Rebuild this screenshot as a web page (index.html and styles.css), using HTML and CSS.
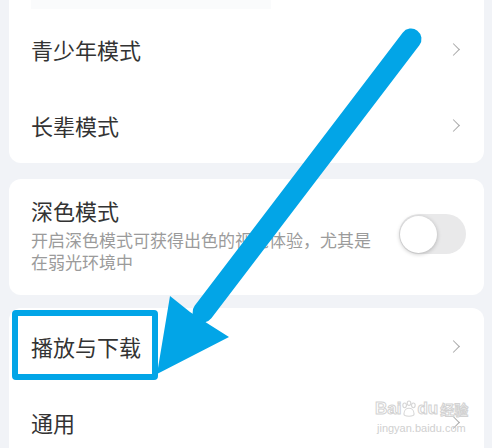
FILE: index.html
```html
<!DOCTYPE html>
<html lang="zh-CN">
<head>
  <meta charset="UTF-8" />
  <meta name="viewport" content="width=device-width, initial-scale=1.0"/>
  <title>设置</title>
  <link rel="stylesheet" href="styles.css">
</head>
<body>

  <div class="page">
    <!-- Mode card -->
    <div class="card card-top">
      <div class="top-fade"><span class="fade-bar"></span></div>
      <div class="row">
        <span class="row-title">青少年模式</span>
        <span class="chevron"></span>
      </div>
      <div class="row">
        <span class="row-title">长辈模式</span>
        <span class="chevron"></span>
      </div>
    </div>

    <!-- Dark mode card -->
    <div class="card card-dark">
      <div class="dark-text">
        <div class="row-title">深色模式</div>
        <div class="row-sub">开启深色模式可获得出色的视觉体验，尤其是</div>
        <div class="row-sub">在弱光环境中</div>
      </div>
      <div class="switch"><span class="knob"></span></div>
    </div>

    <!-- Playback card -->
    <div class="card">
      <div class="row">
        <span class="row-title">播放与下载</span>
        <span class="chevron"></span>
      </div>
      <div class="row">
        <span class="row-title">通用</span>
        <span class="chevron"></span>
      </div>
    </div>
  </div>

  <!-- Annotation overlay -->
  <div class="highlight"></div>
  <svg class="arrow" width="492" height="448" viewBox="0 0 492 448">
    <line x1="411" y1="39" x2="203" y2="312" stroke="#02a5e7" stroke-width="21" stroke-linecap="round"/>
    <polygon points="157,374 170,296 190,312 210,325 229,337" fill="#02a5e7"/>
  </svg>

  <div class="watermark">
    <div class="wm-logo">Bai<svg class="paw" width="16" height="18" viewBox="0 0 22 24">
      <g fill="none" stroke="#d6d6d6" stroke-width="1.5">
        <ellipse cx="5" cy="7" rx="2.5" ry="3.2"/>
        <ellipse cx="11" cy="4" rx="2.5" ry="3"/>
        <ellipse cx="17" cy="7" rx="2.5" ry="3.2"/>
        <path d="M4 19 C4 13 8 11 11 11 C14 11 18 13 18 19 C18 23 4 23 4 19 Z"/>
      </g>
    </svg>du<span class="wm-cn">经验</span></div>
    <div class="wm-url">jingyan.baidu.com</div>
  </div>

</body>
</html>
```

FILE: styles.css
```css
body {
  margin: 0;
  width: 492px;
  height: 448px;
  overflow: hidden;
  background-color: #f1f3f7;
  font-family: "Noto Sans CJK SC", "Noto Sans", sans-serif;
  position: relative;
}

.page {
  display: flex;
  flex-direction: column;
  gap: 13px;
  padding: 0 8px 0 9px;
}

.card {
  background: #fff;
  border-radius: 12px;
}

.card-top {
  border-radius: 0 0 12px 12px;
  margin-bottom: 3px;
}

.top-fade {
  height: 11px;
  padding-left: 22px;
}

.fade-bar {
  display: block;
  width: 240px;
  height: 9px;
  background: #fafbfc;
}

.row {
  height: 76px;
  display: flex;
  align-items: center;
  justify-content: space-between;
  padding: 0 24px 0 22px;
}

.row-title {
  font-size: 22px;
  line-height: 30px;
  color: #333;
}

.chevron {
  width: 8px;
  height: 8px;
  border-top: 1.6px solid #a9a9a9;
  border-right: 1.6px solid #a9a9a9;
  transform: rotate(45deg);
  margin-right: 2px;
}

.card-dark {
  display: flex;
  align-items: center;
  justify-content: space-between;
  padding: 16px 18px 22px 22px;
}

.dark-text .row-title {
  margin-bottom: 4px;
}

.row-sub {
  font-size: 17px;
  line-height: 22px;
  color: #9b9b9b;
}

.switch {
  width: 67px;
  height: 40px;
  border-radius: 20px;
  background: #e9e9ea;
  display: flex;
  align-items: center;
  padding-left: 1px;
  box-sizing: border-box;
}

.knob {
  width: 37px;
  height: 37px;
  border-radius: 50%;
  background: #fff;
  box-shadow: 0 1px 4px rgba(0,0,0,0.25);
}

.highlight {
  position: absolute;
  left: 12px;
  top: 310px;
  width: 134px;
  height: 58px;
  border: 6px solid #02a5e7;
  border-radius: 4px;
}

.arrow {
  position: absolute;
  left: 0;
  top: 0;
}

.watermark {
  position: absolute;
  left: 375px;
  top: 398px;
  width: 100px;
  white-space: nowrap;
  color: #fff;
  font-family: "Liberation Sans", sans-serif;
}

.wm-logo {
  display: flex;
  align-items: center;
  font-size: 17px;
  font-weight: bold;
  line-height: 22px;
  -webkit-text-stroke: 1px #d2d2d2;
}

.paw {
  margin: 0;
}

.wm-cn {
  font-family: "Noto Sans CJK SC", sans-serif;
  font-size: 14px;
  margin-left: 2px;
}

.wm-url {
  font-size: 11px;
  line-height: 16px;
  color: #d0d0d0;
  margin-left: 2px;
}
```
